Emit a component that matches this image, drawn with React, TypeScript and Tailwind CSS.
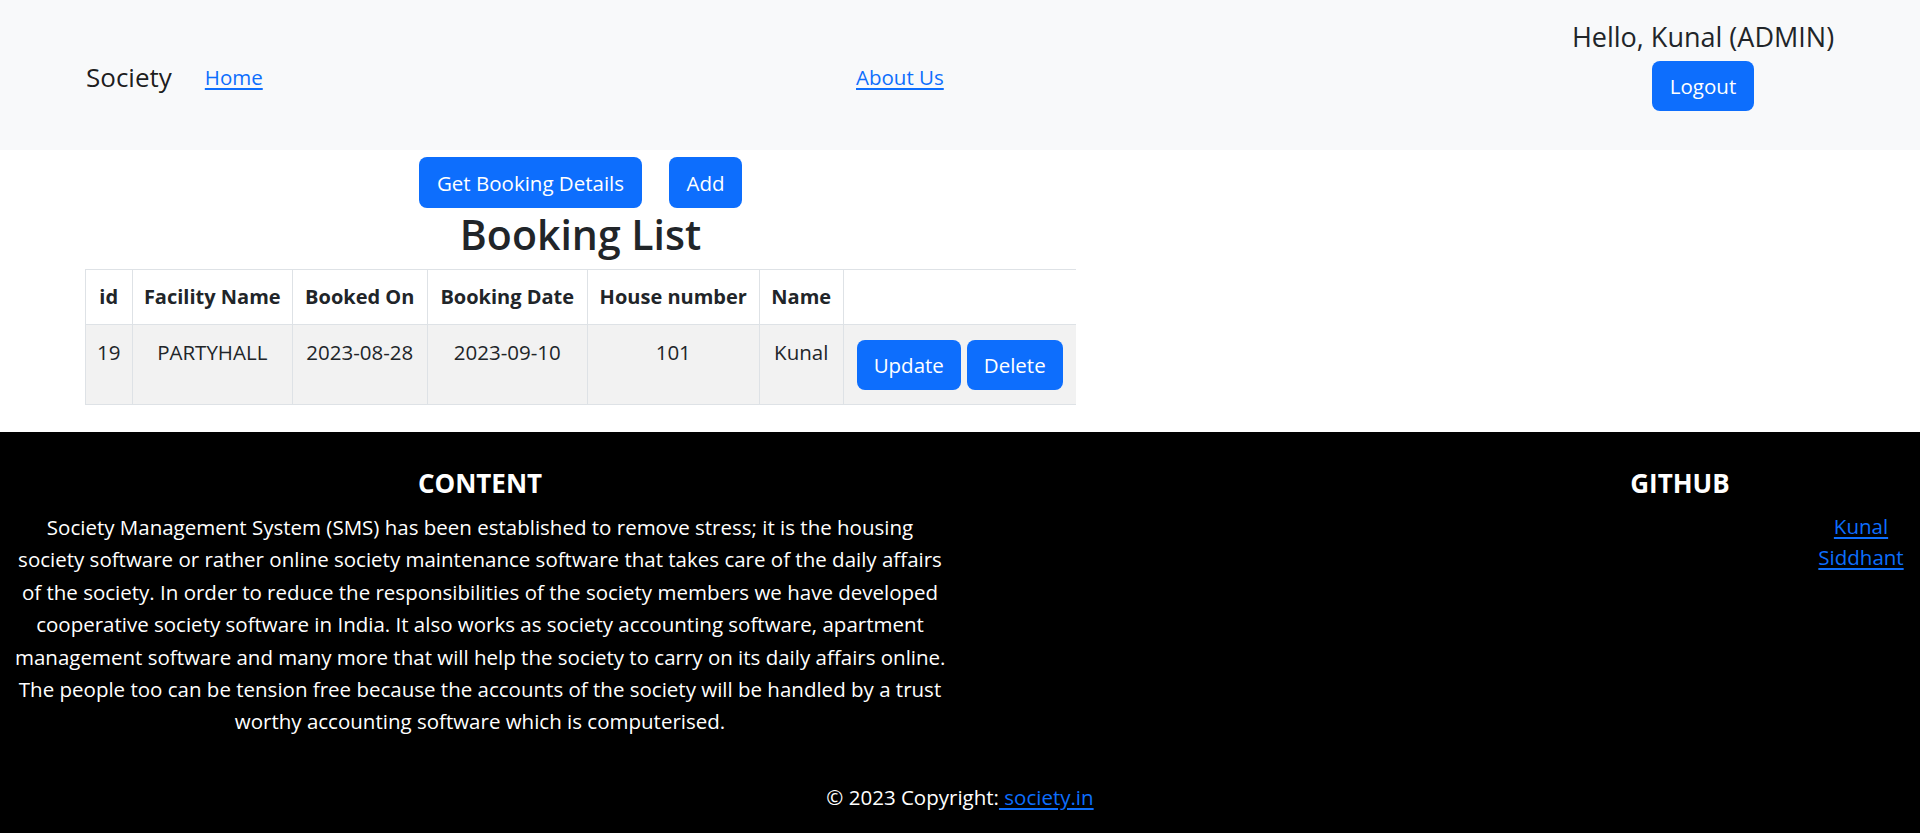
import React from "react";

const lines = [
  "Society Management System (SMS) has been established to remove stress; it is the housing",
  "society software or rather online society maintenance software that takes care of the daily affairs",
  "of the society. In order to reduce the responsibilities of the society members we have developed",
  "cooperative society software in India. It also works as society accounting software, apartment",
  "management software and many more that will help the society to carry on its daily affairs online.",
  "The people too can be tension free because the accounts of the society will be handled by a trust",
  "worthy accounting software which is computerised.",
];

const headers = ["id", "Facility Name", "Booked On", "Booking Date", "House number", "Name", ""];
const widths = [47, 160, 135, 160, 172, 84, 233];
const row = ["19", "PARTYHALL", "2023-08-28", "2023-09-10", "101", "Kunal"];

export default function App() {
  return (
    <div className="min-h-[835px] bg-white font-['Open_Sans',sans-serif] text-[20.5px] leading-[32px] text-[#212529]">
      <nav className="flex h-[150px] bg-[#f8f9fa] px-[86px]">
        <div className="flex w-[770px] items-center pt-[3px]">
          <span className="text-[26px] leading-[32px] text-black/90">Society</span>
          <a href="#" className="ml-[33px] text-[#0d6efd] underline underline-offset-[3px]">
            Home
          </a>
        </div>
        <div className="flex items-center pt-[3px]">
          <a href="#" className="text-[#0d6efd] underline underline-offset-[3px]">
            About Us
          </a>
        </div>
        <div className="ml-auto flex w-[262px] flex-col items-center pt-[21px]">
          <h5 className="whitespace-nowrap text-[27px] font-medium leading-[32px]">Hello, Kunal (ADMIN)</h5>
          <button className="mt-[8px] h-[50px] w-[102px] rounded-[8px] bg-[#0d6efd] text-white">Logout</button>
        </div>
      </nav>

      <main className="pl-[85px] pt-[7px]">
        <div className="flex w-[991px] flex-col items-center">
          <div className="flex gap-[27px]">
            <button className="h-[51px] w-[223px] rounded-[8px] bg-[#0d6efd] text-white">Get Booking Details</button>
            <button className="h-[51px] w-[73px] rounded-[8px] bg-[#0d6efd] text-white">Add</button>
          </div>
          <h2 className="mt-[1px] text-[41px] font-semibold leading-[50px]">Booking List</h2>
          <table className="mt-[10px] w-[991px] table-fixed border-collapse">
            <colgroup>
              {widths.map((w, i) => (
                <col key={i} style={{ width: w }} />
              ))}
            </colgroup>
            <thead>
              <tr className="bg-white">
                {headers.map((h, i) => (
                  <th
                    key={i}
                    className="border-t border-b border-l border-[#dee2e6] px-[10px] py-[11px] text-center text-[20px] font-bold whitespace-nowrap"
                  >
                    {h}
                  </th>
                ))}
              </tr>
            </thead>
            <tbody>
              <tr className="bg-[#f2f2f2]">
                {row.map((c, i) => (
                  <td
                    key={i}
                    className="border-b border-l border-[#dee2e6] px-[10px] pt-[11px] align-top text-center whitespace-nowrap"
                  >
                    {c}
                  </td>
                ))}
                <td className="border-b border-l border-[#dee2e6] pb-[14px] pl-[13px] pt-[15px] align-top">
                  <div className="flex gap-[6px]">
                    <button className="h-[50px] w-[104px] rounded-[8px] bg-[#0d6efd] text-white">Update</button>
                    <button className="h-[50px] w-[96px] rounded-[8px] bg-[#0d6efd] text-white">Delete</button>
                  </div>
                </td>
              </tr>
            </tbody>
          </table>
        </div>
      </main>

      <footer className="mt-[27px] flex h-[401px] flex-col bg-black text-white">
        <div className="grid grid-cols-4 pt-[35px]">
          <div className="col-span-2 px-[15px] text-center">
            <h5 className="text-[26px] font-bold leading-[32px]">CONTENT</h5>
            <p className="mt-[12px] leading-[32.4px]">
              {lines.map((l, i) => (
                <span key={i} className="block whitespace-nowrap">
                  {l}
                </span>
              ))}
            </p>
          </div>
          <div />
          <div>
            <h5 className="text-center text-[26px] font-bold leading-[32px]">GITHUB</h5>
            <ul className="ml-auto mt-[12px] w-[118px] text-center leading-[31px]">
              <li>
                <a href="#" className="text-[#0d6efd] underline underline-offset-[3px]">Kunal</a>
              </li>
              <li>
                <a href="#" className="text-[#0d6efd] underline underline-offset-[3px]">Siddhant</a>
              </li>
            </ul>
          </div>
        </div>
        <div className="mt-auto pb-[20px] text-center">
          © 2023 Copyright:
          <a href="#" className="text-[#0d6efd] underline underline-offset-[3px]"> society.in</a>
        </div>
      </footer>
    </div>
  );
}
